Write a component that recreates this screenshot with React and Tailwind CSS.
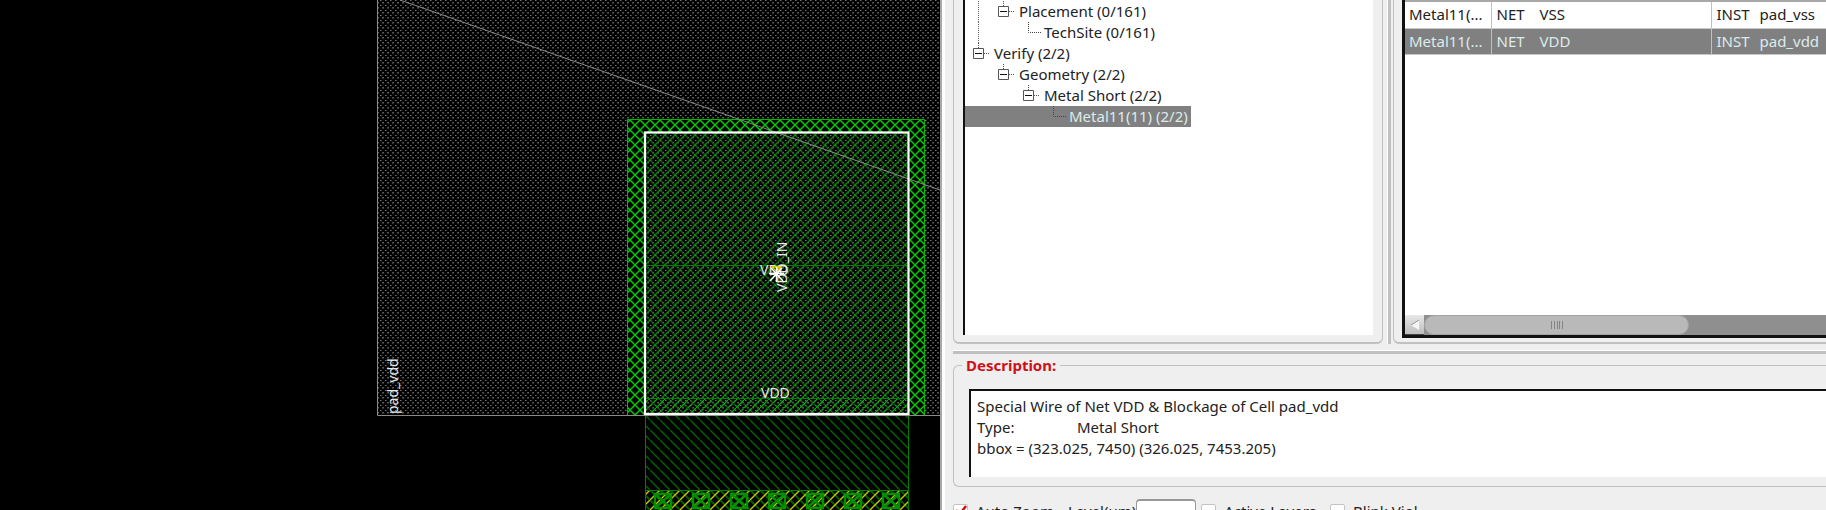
import React from "react";

const VIA_CENTERS = [663, 701, 739, 777, 815, 853, 891];

function Hatch({ id, color, size = 10, back }) {
  const d = back ? `M-1 -1L${size + 1} ${size + 1}` : `M-1 ${size + 1}L${size + 1} -1`;
  return (
    <pattern id={id} width={size} height={size} patternUnits="userSpaceOnUse">
      <path d={d} stroke={color} strokeWidth="1.4" fill="none" />
    </pattern>
  );
}

const RING = "M628 119H925V415H628Z M645 132V415H909V132Z";

function LayoutCanvas() {
  return (
    <svg
      viewBox="0 0 940 510"
      className="block h-auto w-full font-['Noto_Sans',sans-serif] text-[14px]"
      role="img"
      aria-label="Layout view"
    >
      <defs>
        <pattern id="dots" width="5" height="5" patternUnits="userSpaceOnUse">
          <rect x="0" y="0" width="1" height="1" fill="#777" />
          <rect x="1" y="0" width="1" height="1" fill="#3a3a3a" />
          <rect x="2" y="2" width="1" height="1" fill="#4a4a4a" />
          <rect x="3" y="2" width="1" height="1" fill="#5c5c5c" />
          <rect x="2" y="3" width="2" height="1" fill="#2e2e2e" />
        </pattern>
        <Hatch id="brightBack" color="#00d000" back />
        <Hatch id="brightFwd" color="#00d000" />
        <Hatch id="innerBack" color="#006400" back />
        <Hatch id="innerFwd" color="#008c00" />
        <Hatch id="stripFwd" color="#00b000" size={8} />
        <Hatch id="darkBack" color="#006400" back />
        <Hatch id="yellowFwd" color="#c8c800" />
      </defs>
      <rect width="940" height="510" fill="#000" />
      <rect x="377" y="0" width="563" height="415" fill="url(#dots)" />
      <path d="M377.5 0V415.5H940" stroke="#8a8a8a" fill="none" />

      <path d={RING} fillRule="evenodd" fill="#000" />
      <path d={RING} fillRule="evenodd" fill="url(#brightBack)" />
      <path d={RING} fillRule="evenodd" fill="url(#brightFwd)" />
      <path d="M627.5 415V119.5H924.5V415" stroke="#00b800" fill="none" />
      <rect x="645" y="132" width="264" height="283" fill="url(#innerBack)" />
      <rect x="645" y="132" width="264" height="266" fill="url(#innerFwd)" />
      <rect x="645" y="398" width="264" height="16" fill="url(#stripFwd)" />
      <rect x="645" y="132" width="264" height="283" fill="url(#dots)" opacity="0.7" />
      <path d="M645 265.5H909M645 398.5H909" stroke="#008000" />
      <path d="M400 0L940 190" stroke="#8a8a8a" strokeWidth="1" />

      <rect x="645" y="416" width="264" height="94" fill="url(#darkBack)" />
      <rect x="645" y="491" width="264" height="19" fill="url(#innerBack)" />
      <rect x="645" y="491" width="264" height="19" fill="url(#yellowFwd)" />
      <path d="M645.5 416V510M908.5 416V510M645 490.5H909" stroke="#008000" fill="none" />
      {VIA_CENTERS.map((x) => (
        <path
          key={x}
          d={`M${x - 8} 494H${x + 8}V508H${x - 8}ZM${x - 7} 495L${x + 7} 507M${x + 7} 495L${x - 7} 507`}
          stroke="#009000"
          strokeWidth="2.4"
          fill="none"
        />
      ))}
      <rect x="645" y="132.5" width="263.5" height="281.5" stroke="#fff" strokeWidth="2.2" fill="none" />

      <text x="760" y="275" fill="#e8e8e8">VDD</text>
      <text x="761" y="398" fill="#e8e8e8">VDD</text>
      <text transform="translate(787 292) rotate(-90)" fill="#e8e8e8">VDD_IN</text>
      <text transform="translate(398 414) rotate(-90)" fill="#e8e8e8">pad_vdd</text>
      <path d="M772 267H781L777 272Z" stroke="#e0d000" strokeWidth="1.5" fill="none" />
      <path
        d="M776.5 267V282M769 273.5H784M771 268L783 281M782 268L770 281"
        stroke="#fff"
        strokeWidth="1.5"
      />
    </svg>
  );
}

const TREE = [
  { level: 1, label: "Placement (0/161)", open: true, rail: true },
  { level: 2, label: "TechSite (0/161)", rail: true },
  { level: 0, label: "Verify (2/2)", open: true },
  { level: 1, label: "Geometry (2/2)", open: true },
  { level: 2, label: "Metal Short (2/2)", open: true },
  { level: 3, label: "Metal11(11) (2/2)", selected: true },
];

function NodeGlyph({ open }) {
  return (
    <svg width="25" height="21" viewBox="0 0 25 21" className="block" fill="none" stroke="#555">
      {open ? (
        <>
          <path d="M12.5 0V5M18 10.5H24" strokeDasharray="1 1" />
          <path d="M7.5 5.5H17.5V15.5H7.5Z" />
          <path d="M9 10.5H16" stroke="#111" />
        </>
      ) : (
        <path d="M12.5 0V10.5H25" strokeDasharray="1 1" stroke="#444" />
      )}
    </svg>
  );
}

function TreeRow({ node }) {
  return (
    <li className="flex">
      <div
        className={
          node.selected
            ? "flex h-[21px] items-center bg-[#808080] pr-[3px] pl-px text-[#dcebeb]"
            : "flex h-[21px] items-center pr-[3px] pl-px"
        }
      >
        {Array.from({ length: node.level }, (_, i) => (
          <svg key={i} width="25" height="21" viewBox="0 0 25 21" className="block" aria-hidden="true">
            {node.rail && i === 0 && <path d="M12.5 0V21" stroke="#666" strokeDasharray="1 1" />}
          </svg>
        ))}
        {node.open ? (
          <button type="button" aria-label={`Collapse ${node.label}`}>
            <NodeGlyph open />
          </button>
        ) : (
          <NodeGlyph />
        )}
        <span className="pl-[3px] whitespace-nowrap">{node.label}</span>
      </div>
    </li>
  );
}

const ROWS = [
  { layer: "Metal11(...", net: "VSS", inst: "pad_vss" },
  { layer: "Metal11(...", net: "VDD", inst: "pad_vdd", selected: true },
];

function ViolationTable() {
  return (
    <table className="w-full table-fixed border-collapse text-left">
      <colgroup>
        <col className="w-[86px]" />
        <col className="w-[220px]" />
        <col />
      </colgroup>
      <tbody>
        {ROWS.map((r) => (
          <tr
            key={r.inst}
            className={
              r.selected
                ? "h-[26px] border-b border-[#c8c8c8] bg-[#808080] text-[#dcebeb]"
                : "h-[26px] border-b border-[#c8c8c8]"
            }
          >
            <td className="border-r border-[#c0c0c0] pl-1 whitespace-nowrap">{r.layer}</td>
            <td className="border-r border-[#c0c0c0] pl-[5px]">
              <span className="inline-block w-[43px]">NET</span>
              {r.net}
            </td>
            <td className="pl-[5px] whitespace-nowrap">
              <span className="inline-block w-[43px]">INST</span>
              {r.inst}
            </td>
          </tr>
        ))}
      </tbody>
    </table>
  );
}

function ScrollBar() {
  return (
    <div className="flex h-5 bg-[#8f8f8f]">
      <button
        type="button"
        aria-label="Scroll left"
        className="flex w-[19px] items-center justify-center border-b border-[#444] bg-linear-to-b from-[#e8e8e8] to-[#bdbdbd]"
      >
        <svg width="10" height="12" viewBox="0 0 10 12">
          <path d="M9 1L1 6L9 11Z" fill="#f6f6f6" />
          <path d="M9 1L1 6" stroke="#999" />
        </svg>
      </button>
      <div className="flex w-[63%] items-center justify-center rounded-full border border-[#a2a2a2] bg-[#b9b9b9]">
        <svg width="12" height="8" viewBox="0 0 12 8">
          <path d="M.5 0V8M3.5 0V8M6.5 0V8M8.5 0V8M11.5 0V8" stroke="#858585" />
        </svg>
      </div>
    </div>
  );
}

function Check({ label, checked }) {
  return (
    <label className="flex items-center gap-2 whitespace-nowrap">
      <span className="grid size-[15px]">
        <input
          type="checkbox"
          defaultChecked={checked}
          className="peer col-start-1 row-start-1 size-[15px] appearance-none rounded-xs border border-[#c4c4c4] bg-white"
        />
        <svg
          viewBox="0 0 15 15"
          className="pointer-events-none invisible col-start-1 row-start-1 peer-checked:visible"
        >
          <path d="M3 6L6 11L13 2" stroke="#d0101a" strokeWidth="2.5" fill="none" />
        </svg>
      </span>
      {label}
    </label>
  );
}

const DESCRIPTION = `Special Wire of Net VDD & Blockage of Cell pad_vdd
Type:\tMetal Short
bbox = (323.025, 7450) (326.025, 7453.205)`;

export default function App() {
  return (
    <div className="flex h-screen overflow-hidden bg-black font-['Noto_Sans',sans-serif] text-[15px] leading-[21px] text-[#222]">
      <main className="min-w-0 flex-[940]">
        <LayoutCanvas />
      </main>
      <aside className="flex min-w-0 flex-[886] bg-[#efefef]">
        <div className="w-[2px] bg-[#a8a8a8]" />
        <div className="flex min-w-0 flex-1 flex-col border-l-3 border-white pl-2">
          <div className="flex min-h-0 flex-1">
            <section className="flex min-w-0 flex-[410] rounded-b-md border-x border-b-2 border-[#c0c0c0] px-[9px] pb-[7px]">
              <div className="min-w-0 flex-1 border-l-2 border-[#111] bg-white pt-px">
                <ul>
                  {TREE.map((n) => (
                    <TreeRow key={n.label} node={n} />
                  ))}
                </ul>
              </div>
            </section>
            <div className="flex w-[10px] justify-end pr-[2px]">
              <div className="w-1 border-l border-white bg-[#c0c0c0]" />
            </div>
            <section className="flex min-w-0 flex-[424] rounded-bl-md border-b-2 border-l border-[#c0c0c0] pb-1 pl-2">
              <div className="flex min-w-0 flex-1 flex-col justify-between border-b-3 border-l-3 border-[#111] bg-white">
                <div className="border-t-2 border-t-[#a8a8a8]">
                  <ViolationTable />
                </div>
                <ScrollBar />
              </div>
            </section>
          </div>
          <div className="mt-[6px] h-1 border-t border-white bg-[#c0c0c0]" />
          <fieldset className="mt-px min-w-0 rounded-l-md border border-r-0 border-[#c0c0c0] pb-[9px] pl-[15px]">
            <legend className="-ml-[7px] px-[4px] font-bold text-[#d01018]">
              <label htmlFor="description">Description:</label>
            </legend>
            <textarea
              id="description"
              readOnly
              rows={4}
              value={DESCRIPTION}
              className="mt-[13px] block h-[88px] w-full resize-none overflow-hidden border-t-2 border-l-2 border-[#111] bg-white px-[6px] pt-[5px] whitespace-pre outline-none [tab-size:100px]"
            />
          </fieldset>
          <div className="flex h-[23px] items-start overflow-hidden pt-[12px]">
            <div className="flex h-[25px] shrink-0 items-center">
              <Check label="Auto Zoom" checked />
              <label htmlFor="level" className="pl-[14px]">
                Level(um)
              </label>
              <input
                id="level"
                className="mr-[5px] h-[25px] w-[60px] rounded-sm border border-t-2 border-[#999] bg-white px-1"
              />
              <Check label="Active Layers" />
              <div className="pl-[14px]">
                <Check label="Blink Viol" />
              </div>
            </div>
          </div>
        </div>
      </aside>
    </div>
  );
}
